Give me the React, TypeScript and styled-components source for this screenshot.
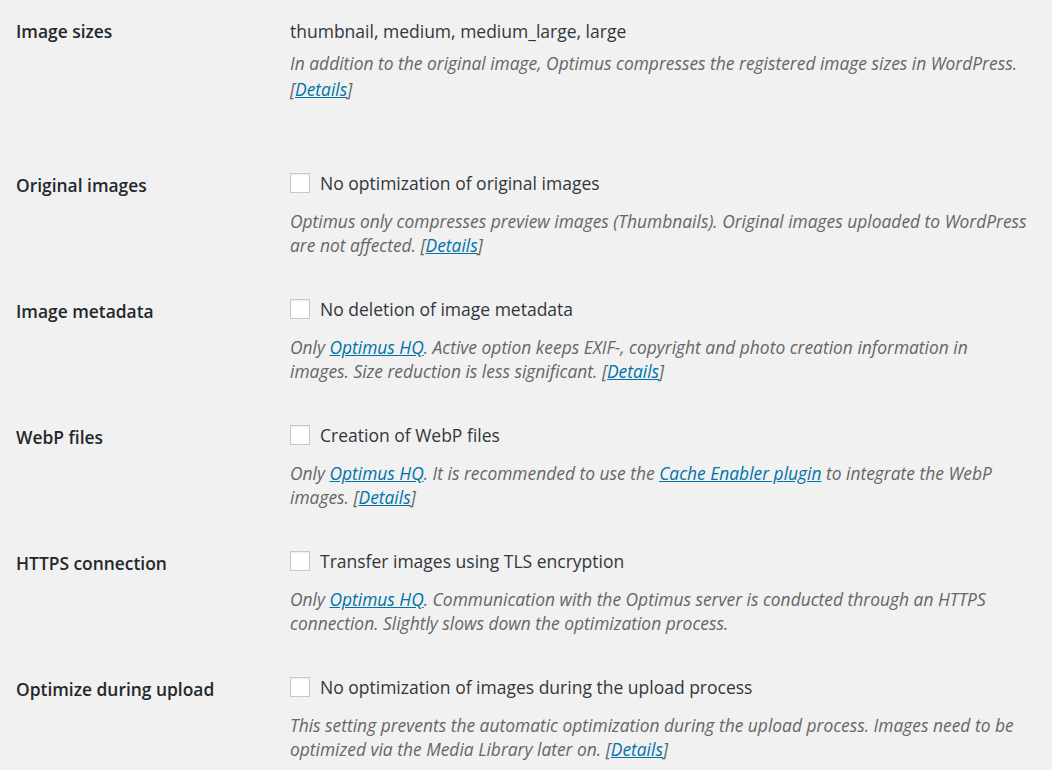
import React from "react";
import styled, { createGlobalStyle } from "styled-components";

const GlobalStyle = createGlobalStyle`
  html, body {
    margin: 0;
    padding: 0;
    background: #f1f1f1;
  }
  body {
    font-family: "Open Sans", "Noto Sans", sans-serif;
    color: #23282d;
    overflow: hidden;
  }
`;

const Table = styled.div`
  display: flex;
  flex-direction: column;
  width: 1052px;
`;

const Row = styled.div<{ $top?: number; $bottom?: number }>`
  display: grid;
  grid-template-columns: 290px 1fr;
  padding-top: ${(p) => p.$top ?? 20}px;
  padding-bottom: ${(p) => p.$bottom ?? 20}px;
`;

const Label = styled.div<{ $shift?: number }>`
  padding-left: 16px;
  padding-top: ${(p) => p.$shift ?? 0}px;
  font-size: 17.4px;
  line-height: 24px;
  font-weight: 600;
  color: #23282d;
`;

const Field = styled.div`
  display: flex;
  flex-direction: column;
`;

const Value = styled.div`
  font-size: 17.5px;
  line-height: 24px;
  color: #32373c;
`;

const CheckLine = styled.label`
  display: flex;
  align-items: center;
  gap: 10px;
  font-size: 17.5px;
  line-height: 24px;
  color: #32373c;
`;

const Box = styled.span`
  width: 18px;
  height: 18px;
  background: #fff;
  border: 1px solid #c7c7c7;
  box-shadow: inset 0 1px 2px rgba(0, 0, 0, 0.07);
  flex: none;
`;

const Description = styled.p<{ $gap?: number; $lh?: number }>`
  margin: ${(p) => p.$gap ?? 14}px 0 0;
  font-size: 17.4px;
  line-height: ${(p) => p.$lh ?? 24}px;
  font-style: italic;
  color: #666;
  white-space: nowrap;
`;

const Link = styled.a`
  color: #0073aa;
  text-decoration: underline;
`;

const Details = () => (
  <>
    [<Link href="#">Details</Link>]
  </>
);

const HQ = () => <Link href="#">Optimus HQ</Link>;

const CheckRow = ({
  label,
  text,
  children,
}: {
  label: string;
  text: string;
  children: React.ReactNode;
}) => (
  <Row>
    <Label $shift={2}>{label}</Label>
    <Field>
      <CheckLine>
        <Box />
        {text}
      </CheckLine>
      <Description>{children}</Description>
    </Field>
  </Row>
);

export default function App() {
  return (
    <>
      <GlobalStyle />
      <Table>
        <Row $top={19} $bottom={49}>
          <Label>Image sizes</Label>
          <Field>
            <Value>thumbnail, medium, medium_large, large</Value>
            <Description $gap={7} $lh={26}>
              In addition to the original image, Optimus compresses the registered image sizes in WordPress.
              <br />
              <Details />
            </Description>
          </Field>
        </Row>

        <CheckRow label="Original images" text="No optimization of original images">
          Optimus only compresses preview images (Thumbnails). Original images uploaded to WordPress
          <br />
          are not affected. <Details />
        </CheckRow>

        <CheckRow label="Image metadata" text="No deletion of image metadata">
          Only <HQ />. Active option keeps EXIF-, copyright and photo creation information in
          <br />
          images. Size reduction is less significant. <Details />
        </CheckRow>

        <CheckRow label="WebP files" text="Creation of WebP files">
          Only <HQ />. It is recommended to use the <Link href="#">Cache Enabler plugin</Link> to integrate the WebP
          <br />
          images. <Details />
        </CheckRow>

        <CheckRow label="HTTPS connection" text="Transfer images using TLS encryption">
          Only <HQ />. Communication with the Optimus server is conducted through an HTTPS
          <br />
          connection. Slightly slows down the optimization process.
        </CheckRow>

        <CheckRow label="Optimize during upload" text="No optimization of images during the upload process">
          This setting prevents the automatic optimization during the upload process. Images need to be
          <br />
          optimized via the Media Library later on. <Details />
        </CheckRow>
      </Table>
    </>
  );
}
